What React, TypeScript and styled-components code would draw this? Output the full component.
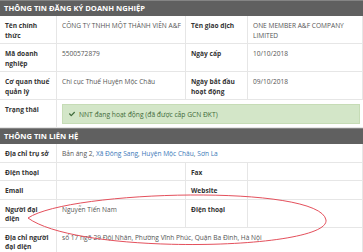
import React from "react";
import styled, { createGlobalStyle } from "styled-components";
import { FaCheck } from "react-icons/fa";

const GlobalStyle = createGlobalStyle`
  body {
    margin: 0;
    background: #fff;
    font-family: "Open Sans", "Liberation Sans", sans-serif;
  }
`;

const Page = styled.div`
  position: relative;
  width: 363px;
  height: 252px;
  overflow: hidden;
`;

const SectionHeader = styled.div`
  height: 15px;
  border-top: 1px solid #858585;
  background: #606060;
  color: #fff;
  font-size: 7.6px;
  font-weight: 700;
  line-height: 15px;
  padding-left: 4px;
`;

const Grid = styled.div`
  display: grid;
  grid-template-columns: 57px 129px 62px 1fr;
`;

const Cell = styled.div<{ $label?: boolean; $span?: number }>`
  grid-column: span ${(p) => p.$span ?? 1};
  padding: 5px ${(p) => (p.$label ? "4px" : "1px")} 3px 5px;
  border-bottom: 1px solid #e6e6e6;
  border-right: 1px solid #e6e6e6;
  font-size: 6.6px;
  line-height: 9.5px;
  font-weight: ${(p) => (p.$label ? 700 : 400)};
  color: ${(p) => (p.$label ? "#333" : "#555")};
`;

const StatusCell = styled.div`
  grid-column: span 3;
  padding: 4px 3px 3px 5px;
  border-bottom: 1px solid #e6e6e6;
`;

const StatusBox = styled.div`
  display: flex;
  align-items: center;
  gap: 4px;
  height: 18px;
  padding: 0 6px;
  background: #d3e6c8;
  border: 1px solid #c6dcb6;
  color: #3f6a3a;
  font-size: 6.7px;
`;

const Link = styled.a`
  color: #3a78b8;
  text-decoration: none;
`;

const Annotation = styled.svg`
  position: absolute;
  left: 0;
  top: 0;
  pointer-events: none;
`;

export default function App() {
  return (
    <Page>
      <GlobalStyle />
      <SectionHeader>THÔNG TIN ĐĂNG KÝ DOANH NGHIỆP</SectionHeader>
      <Grid>
        <Cell $label>Tên chính thức</Cell>
        <Cell>CÔNG TY TNHH MỘT THÀNH VIÊN A&amp;F</Cell>
        <Cell $label>Tên giao dịch</Cell>
        <Cell>ONE MEMBER A&amp;F COMPANY LIMITED</Cell>

        <Cell $label>Mã doanh nghiệp</Cell>
        <Cell>5500572879</Cell>
        <Cell $label>Ngày cấp</Cell>
        <Cell>10/10/2018</Cell>

        <Cell $label>Cơ quan thuế quản lý</Cell>
        <Cell>Chi cục Thuế Huyện Mộc Châu</Cell>
        <Cell $label>Ngày bắt đầu hoạt động</Cell>
        <Cell>09/10/2018</Cell>

        <Cell $label>Trạng thái</Cell>
        <StatusCell>
          <StatusBox>
            <FaCheck size={6} />
            NNT đang hoạt động (đã được cấp GCN ĐKT)
          </StatusBox>
        </StatusCell>
      </Grid>

      <SectionHeader>THÔNG TIN LIÊN HỆ</SectionHeader>
      <Grid>
        <Cell $label>Địa chỉ trụ sở</Cell>
        <Cell $span={3}>
          Bản áng 2, <Link>Xã Đông Sang</Link>, <Link>Huyện Mộc Châu</Link>,{" "}
          <Link>Sơn La</Link>
        </Cell>

        <Cell $label>Điện thoại</Cell>
        <Cell></Cell>
        <Cell $label>Fax</Cell>
        <Cell></Cell>

        <Cell $label>Email</Cell>
        <Cell></Cell>
        <Cell $label>Website</Cell>
        <Cell></Cell>

        <Cell $label>Người đại diện</Cell>
        <Cell>Nguyễn Tiến Nam</Cell>
        <Cell $label>Điện thoại</Cell>
        <Cell></Cell>

        <Cell $label>Địa chỉ người đại diện</Cell>
        <Cell $span={3}>số 17 ngõ 29 Đội Nhân, Phường Vĩnh Phúc, Quận Ba Đình, Hà Nội</Cell>
      </Grid>

      <Annotation width="363" height="252" viewBox="0 0 363 252">
        <path
          d="M28 218 C70 190 320 184 326 220 C330 250 80 256 28 218"
          fill="none"
          stroke="#e4505c"
          strokeWidth="1"
        />
      </Annotation>
    </Page>
  );
}
